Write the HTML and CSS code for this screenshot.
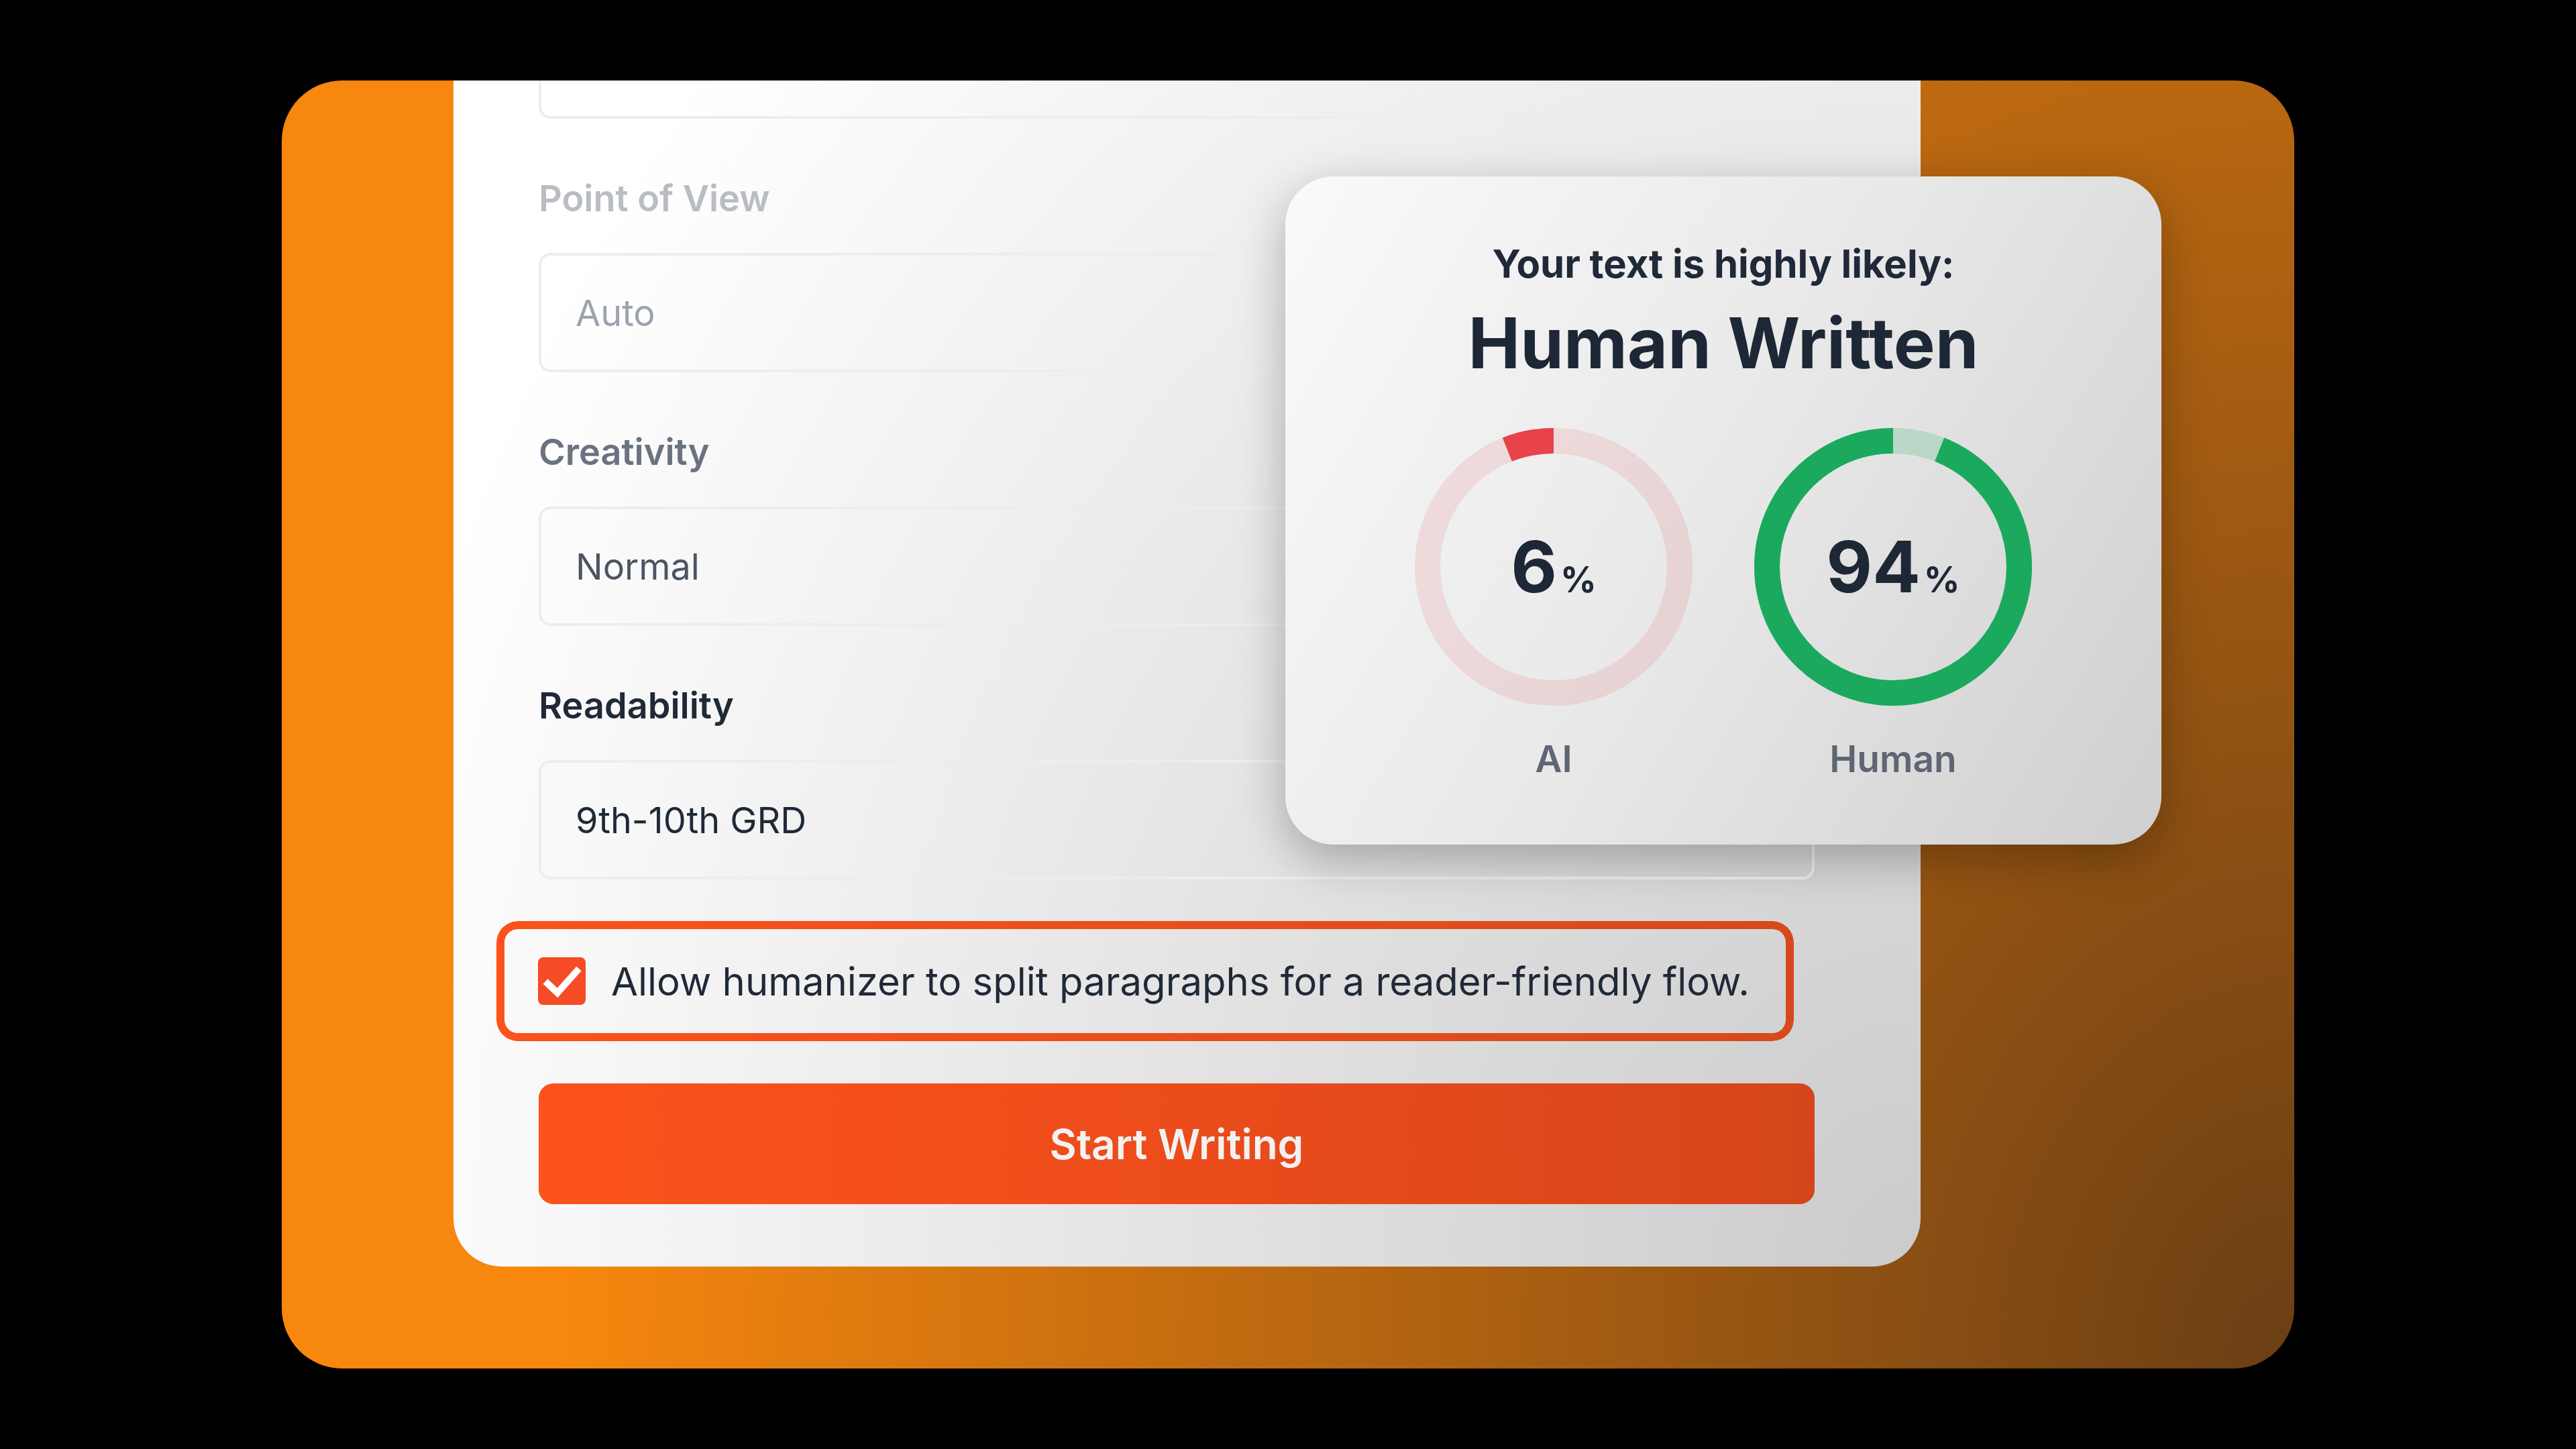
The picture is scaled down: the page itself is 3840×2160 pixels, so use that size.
FILE: index.html
```html
<!DOCTYPE html>
<html lang="en">
<head>
<meta charset="utf-8">
<title>Humanizer</title>
<link rel="stylesheet" href="styles.css">
</head>
<body>
<main class="stage">
  <section class="frame">
    <div class="card">
      <div class="field">
        <div class="input input-ghost"></div>
      </div>
      <div class="field">
        <span class="label label-faint">Point of View</span>
        <div class="input input-faint">Auto</div>
      </div>
      <div class="field">
        <span class="label label-mid">Creativity</span>
        <div class="input input-mid">Normal</div>
      </div>
      <div class="field">
        <span class="label label-strong">Readability</span>
        <div class="input input-strong">9th-10th GRD</div>
      </div>
      <div class="agree">
        <span class="check">
          <svg viewBox="0 0 71 71" width="71" height="71" aria-hidden="true">
            <polyline points="11,36 29,53 61,17" fill="none" stroke="#ffffff" stroke-width="10" stroke-linecap="butt" stroke-linejoin="miter"/>
          </svg>
        </span>
        <span class="agree-text">Allow humanizer to split paragraphs for a reader-friendly flow.</span>
      </div>
      <button class="start" type="button">Start Writing</button>
    </div>

    <aside class="result">
      <p class="result-lead">Your text is highly likely:</p>
      <h2 class="result-title">Human Written</h2>
      <div class="gauges">
        <div class="gauge">
          <div class="ring">
            <svg class="ring-svg" viewBox="0 0 414 414" width="414" height="414" aria-hidden="true">
              <circle class="track track-ai" cx="207" cy="207" r="188"/>
              <circle class="arc arc-ai" cx="207" cy="207" r="188" pathLength="100" transform="rotate(-111.6 207 207)"/>
            </svg>
            <div class="pct"><span class="num">6</span><span class="sign">%</span></div>
          </div>
          <div class="gauge-label">AI</div>
        </div>
        <div class="gauge">
          <div class="ring">
            <svg class="ring-svg" viewBox="0 0 414 414" width="414" height="414" aria-hidden="true">
              <circle class="track track-human" cx="207" cy="207" r="188"/>
              <circle class="arc arc-human" cx="207" cy="207" r="188" pathLength="100" transform="rotate(-68.4 207 207)"/>
            </svg>
            <div class="pct"><span class="num">94</span><span class="sign">%</span></div>
          </div>
          <div class="gauge-label">Human</div>
        </div>
      </div>
    </aside>
  </section>
</main>
</body>
</html>
```

FILE: styles.css
```css
* {
  box-sizing: border-box;
}

html, body {
  margin: 0;
  padding: 0;
  background: #000000;
}

body {
  font-family: "Inter", "Noto Sans", "Liberation Sans", sans-serif;
}

.stage {
  width: 100vw;
  height: 100vh;
  display: flex;
  align-items: center;
  justify-content: center;
}

.frame {
  position: relative;
  width: 3000px;
  height: 1920px;
  border-radius: 90px;
  overflow: hidden;
  display: flex;
  align-items: flex-end;
  padding: 0 0 152px 256px;
  background: radial-gradient(2580px 3430px at 100% 100%, #6a3e14 0%, #f7870e 100%);
}

/* ---------- form card ---------- */
.card {
  flex: none;
  width: 2187px;
  display: flex;
  flex-direction: column;
  padding: 80px 158px 93px 127px;
  border-radius: 72px;
  background: radial-gradient(2380px 2800px at 100% 100%, #cbcbcb 0%, #ffffff 100%);
}

.field {
  display: flex;
  flex-direction: column;
}

.field + .field {
  margin-top: 86px;
}

.label {
  font-size: 54px;
  line-height: 66px;
  font-weight: 600;
  margin-bottom: 48px;
}

.label-faint { color: #b9bdc3; }
.label-mid { color: #6b7280; }
.label-strong { color: #1f2937; }

.input {
  height: 178px;
  border: 4px solid #ededed;
  border-radius: 18px;
  padding: 0 51px;
  display: flex;
  align-items: center;
  font-size: 54px;
  font-weight: 400;
}

.input-faint { color: #9ca3af; }
.input-mid { color: #4b5563; }
.input-strong { color: #1f2937; }

.agree {
  position: relative;
  margin: 62px 0 0 -63px;
  width: 1934px;
  height: 179px;
  border-radius: 32px;
  display: flex;
  align-items: center;
  gap: 38px;
  padding-left: 62px;
}

.agree::before {
  content: "";
  position: absolute;
  inset: 0;
  border-radius: 32px;
  padding: 12px;
  background: linear-gradient(to right, #fc521b 0%, #ea4d1b 55%, #d7491b 100%);
  -webkit-mask: linear-gradient(#000 0 0) content-box, linear-gradient(#000 0 0);
  -webkit-mask-composite: xor;
  mask-composite: exclude;
}

.check {
  flex: none;
  width: 71px;
  height: 71px;
  border-radius: 8px;
  background: #f54b26;
  display: flex;
}

.agree-text {
  font-size: 58px;
  font-weight: 400;
  color: #1f2937;
  white-space: nowrap;
}

.start {
  margin-top: 63px;
  height: 180px;
  width: 100%;
  border: none;
  border-radius: 22px;
  background: linear-gradient(to right, #fc521b 0%, #ec4c1b 50%, #d4461a 100%);
  color: #f2f2f2;
  font-family: inherit;
  font-size: 62px;
  font-weight: 600;
  cursor: pointer;
}

/* ---------- result popup ---------- */
.result {
  position: absolute;
  left: 1496px;
  top: 143px;
  width: 1306px;
  height: 996px;
  border-radius: 72px;
  padding-top: 96px;
  display: flex;
  flex-direction: column;
  align-items: center;
  text-align: center;
  background: linear-gradient(120deg, #fafafa 0%, #e8e8e8 50%, #cfcfcf 100%);
  box-shadow: 0 22px 70px rgba(0, 0, 0, 0.28);
}

.result-lead {
  margin: 0;
  font-size: 58px;
  line-height: 68px;
  font-weight: 700;
  color: #1f2937;
}

.result-title {
  margin: 22px 0 0;
  font-size: 104px;
  line-height: 1.2;
  font-weight: 700;
  color: #1e2735;
}

.gauges {
  margin-top: 64px;
  display: flex;
  gap: 92px;
}

.gauge {
  display: flex;
  flex-direction: column;
  align-items: center;
}

.ring {
  width: 414px;
  height: 414px;
  display: grid;
}

.ring-svg,
.pct {
  grid-area: 1 / 1;
}

.pct {
  place-self: center;
  display: flex;
  align-items: baseline;
  line-height: 1;
  color: #1e2735;
  font-weight: 700;
}

.num {
  font-size: 106px;
}

.sign {
  font-size: 53px;
  margin-left: 5px;
}

.track,
.arc {
  fill: none;
  stroke-width: 38;
}

.track-ai { stroke: rgba(233, 67, 74, 0.12); }
.arc-ai {
  stroke: #e8424a;
  stroke-dasharray: 6 94;
}

.track-human { stroke: rgba(27, 169, 94, 0.2); }
.arc-human {
  stroke: #1ba95e;
  stroke-dasharray: 94 6;
}

.gauge-label {
  margin-top: 46px;
  font-size: 55px;
  line-height: 66px;
  font-weight: 600;
  color: #5f6673;
}
```
